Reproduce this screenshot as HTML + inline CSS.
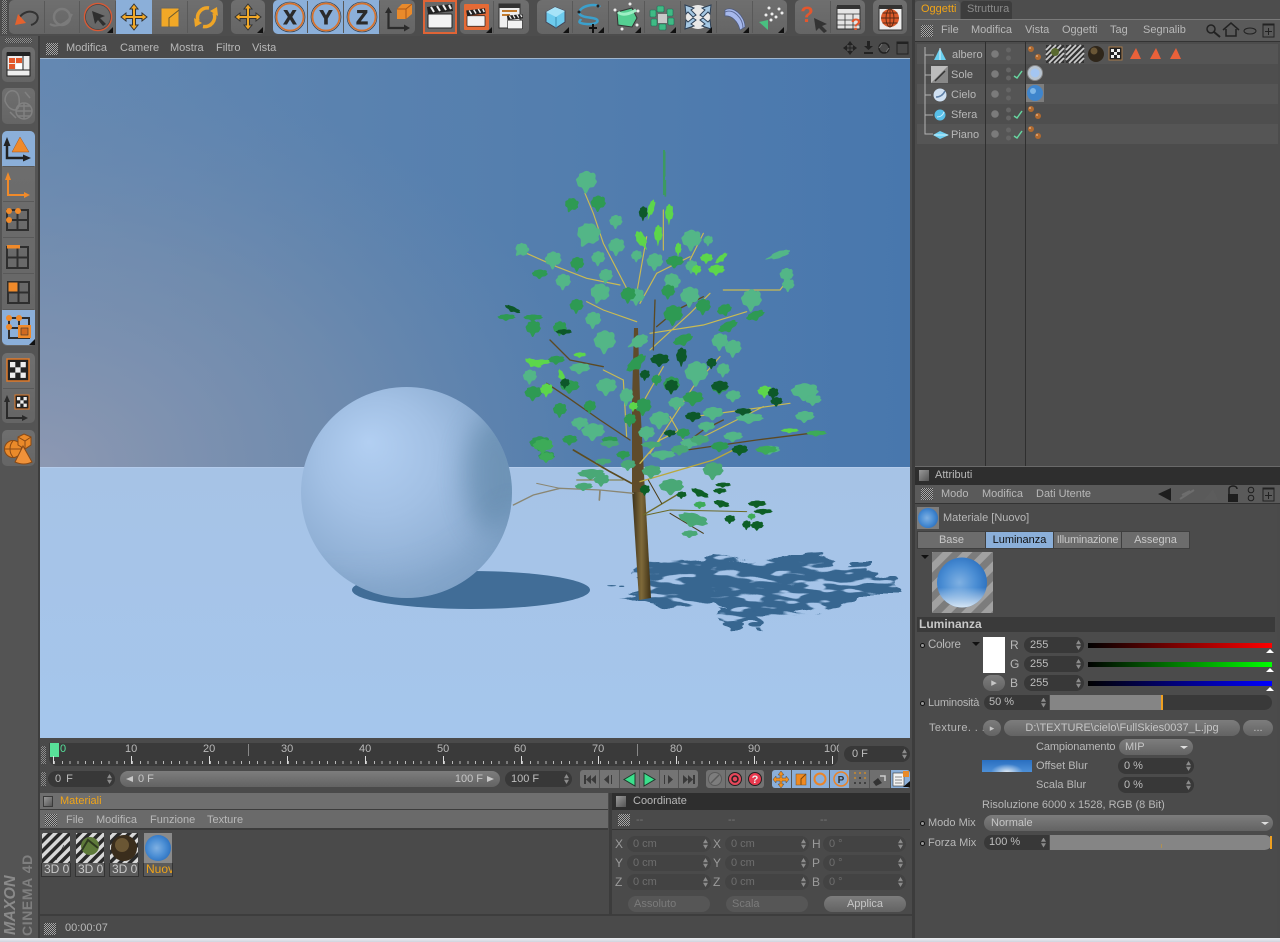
<!DOCTYPE html>
<html><head><meta charset="utf-8"><title>Cinema 4D</title>
<style>
html,body{margin:0;padding:0;background:#4a4a4a}
#p{position:relative;width:1280px;height:942px;overflow:hidden;background:#4a4a4a;font-family:"Liberation Sans",sans-serif;font-size:11px;color:#b8b8b8}
#p div{position:absolute;box-sizing:border-box}
.t{position:absolute;white-space:nowrap;line-height:13px}
.g{width:12px;height:12px;background:repeating-conic-gradient(#a8a8a8 0 25%,#3e3e3e 0 50%) 0 0/2px 2px}
.b{background:linear-gradient(#6f6f6f,#656565);border-radius:5px}
.u{background:#8bafd9}
.f{background:#383838;border-radius:8px;color:#bdbdbd;line-height:16px;padding-left:6px;white-space:nowrap}
.f::after{content:"";position:absolute;right:3px;top:50%;margin-top:-5px;width:5px;height:10px;background:#8c8c8c;clip-path:polygon(50% 0,100% 42%,0 42%,50% 0,50% 100%,0 58%,100% 58%,50% 100%)}
.d{color:#6e6e6e;background:#434343}
.p{background:linear-gradient(#7d7d7d,#636363);border-radius:8px;color:#c6c6c6;text-align:center;line-height:16px;white-space:nowrap;overflow:hidden}
.c{text-align:center;line-height:16px;background:#6c6c6c;color:#c8c8c8;border:1px solid #3f3f3f}
.o{width:5px;height:5px;border:1px solid #111;border-radius:50%;background:#999}
</style></head><body><div id="p">

<!-- left column -->
<div style="left:0;top:0;width:38px;height:938px;background:#545454"></div>
<div style="left:38px;top:36px;width:2px;height:902px;background:#3d3d3d"></div>
<div style="left:0;top:0;width:1280px;height:36px;background:#4d4d4d"></div>
<div style="left:2px;top:0;width:5px;height:34px;background:repeating-conic-gradient(#8d8d8d 0 25%,#444 0 50%) 0 0/2px 2px"></div>
<div style="left:5px;top:38px;width:27px;height:5px;background:repeating-conic-gradient(#8d8d8d 0 25%,#444 0 50%) 0 0/2px 2px"></div>

<!-- top toolbar -->
<div class="b" style="left:9px;top:0;width:214px;height:34px"></div>
<div class="u" style="left:116px;top:0;width:36px;height:34px"></div>
<div class="b" style="left:231px;top:0;width:34px;height:34px"></div>
<div class="b" style="left:273px;top:0;width:142px;height:34px"></div>
<div class="u" style="left:273px;top:0;width:106px;height:34px;border-radius:5px 0 0 5px"></div>
<div style="left:423px;top:0;width:34px;height:34px;background:#686868;border:2px solid #df6436"></div>
<div class="b" style="left:460px;top:0;width:69px;height:34px"></div>
<div class="b" style="left:537px;top:0;width:250px;height:34px"></div>
<div class="b" style="left:795px;top:0;width:70px;height:34px"></div>
<div class="b" style="left:873px;top:0;width:34px;height:34px"></div>

<!-- left toolbar -->
<div class="b" style="left:2px;top:47px;width:33px;height:35px"></div>
<div class="b" style="left:2px;top:88px;width:33px;height:36px"></div>
<div class="b" style="left:2px;top:131px;width:33px;height:215px"></div>
<div class="u" style="left:2px;top:131px;width:33px;height:35px;border-radius:5px 5px 0 0"></div>
<div class="u" style="left:2px;top:310px;width:33px;height:35px;border-radius:0 0 5px 5px"></div>
<div class="b" style="left:2px;top:353px;width:33px;height:70px"></div>
<div class="b" style="left:2px;top:430px;width:33px;height:36px"></div>
<div class="t" style="left:-20px;top:897px;transform:rotate(-90deg);font-weight:bold;font-style:italic;font-size:16px;line-height:14px;width:62px;color:#8a8a8a">MAXON</div>
<div class="t" style="left:-13px;top:889px;transform:rotate(-90deg);font-weight:bold;font-size:14px;line-height:14px;width:80px;color:#7f7f7f;letter-spacing:.6px">CINEMA 4D</div>

<!-- viewport menu -->
<div class="g" style="left:46px;top:43px"></div>
<span class="t" style="left:66px;top:42px">Modifica</span><span class="t" style="left:120px;top:42px">Camere</span><span class="t" style="left:170px;top:42px">Mostra</span><span class="t" style="left:216px;top:42px">Filtro</span><span class="t" style="left:252px;top:42px">Vista</span>

<!-- viewport scene & icons -->
<svg style="position:absolute;left:0;top:0;z-index:3" width="1280" height="942" viewBox="0 0 1280 942" xmlns="http://www.w3.org/2000/svg">
<defs>
<linearGradient id="sk" x1="0" y1="0" x2="1" y2="0"><stop offset="0" stop-color="#6488b2"/><stop offset=".35" stop-color="#5a82af"/><stop offset="1" stop-color="#4877ad"/></linearGradient>
<radialGradient id="sl" cx="0" cy="1" r="1"><stop offset="0" stop-color="#8f99b2" stop-opacity=".95"/><stop offset=".55" stop-color="#7e91ad" stop-opacity=".55"/><stop offset="1" stop-color="#6f8aad" stop-opacity="0"/></radialGradient>
<linearGradient id="fl" x1="0" y1="0" x2="0" y2="1"><stop offset="0" stop-color="#a6c3e6"/><stop offset="1" stop-color="#a5c6ec"/></linearGradient>
<radialGradient id="sp" cx=".42" cy=".42" r=".62" fx=".32" fy=".26"><stop offset="0" stop-color="#b2cff2"/><stop offset=".45" stop-color="#a2c0e4"/><stop offset=".8" stop-color="#90b0d5"/><stop offset="1" stop-color="#7da0c5"/></radialGradient>
<linearGradient id="tr" x1="0" y1="0" x2="1" y2="0"><stop offset="0" stop-color="#3a2f18"/><stop offset=".5" stop-color="#7f6a3a"/><stop offset="1" stop-color="#3d3015"/></linearGradient>
<filter id="bl" x="-50%" y="-50%" width="200%" height="200%"><feGaussianBlur stdDeviation="13"/></filter>
<filter id="sb"><feGaussianBlur stdDeviation=".3"/></filter>
<filter id="mot" x="-5%" y="-10%" width="110%" height="120%" color-interpolation-filters="sRGB">
<feTurbulence type="fractalNoise" baseFrequency=".035 .15" numOctaves="2" seed="7" result="n"/>
<feDisplacementMap in="SourceGraphic" in2="n" scale="16" xChannelSelector="R" yChannelSelector="G" result="d"/>
<feColorMatrix in="n" type="matrix" values="0 0 0 0 0 0 0 0 0 0 0 0 0 0 0 -14 0 0 0 8.800" result="m"/>
<feComposite in="d" in2="m" operator="in"/>
</filter>
<clipPath id="sc"><circle cx="406.500" cy="492.500" r="105.500"/></clipPath>
<clipPath id="vc"><rect x="40" y="58" width="870" height="680"/></clipPath>
<path id="l" d="M0-10C3-10 3-7 5-8S9-7 8-4 11-1 9 1 8 5 5 5 2 6 0 10-2 6-5 5-8 5-9 1-11-1-8-4-9-7-5-8-3-10 0-10Z"/>
<g id="mv"><path d="M0-13 4-8H1.500V-1.500H8V-4L13 0 8 4V1.500H1.500V8H4L0 13-4 8H-1.500V1.500H-8V4L-13 0-8-4V-1.500H-1.500V-8H-4Z" fill="#f1a827" stroke="#333" stroke-width="1"/></g>
<g id="cl"><rect x="-12" y="-3" width="24" height="14" rx="1" fill="#f2f2f2" stroke="#222"/><path d="M-13-10 12-13 13-6-12-3Z" fill="#222"/><path d="M-9-10-6-5M-3-11 0-6M3-12 6-7M9-12 11-8" stroke="#eee" stroke-width="2"/></g>
<path id="tg" d="M6 0V6H0Z" fill="#111"/>
<g id="ball"><circle cx="0" cy="0" r="3" fill="#b06a30"/><circle cx="-1" cy="-1" r="1" fill="#e0a878"/></g>
</defs>
<g clip-path="url(#vc)">
<rect x="40" y="58" width="870" height="410" fill="url(#sk)"/>
<rect x="40" y="58" width="560" height="410" fill="url(#sl)"/>
<rect x="40" y="467" width="870" height="271" fill="url(#fl)"/>
<rect x="40" y="467" width="870" height="1" fill="#b3cbeb"/>
<ellipse cx="471" cy="590" rx="119" ry="19" fill="#416d97"/>
<circle cx="406.500" cy="492.500" r="105.500" fill="url(#sp)"/>
<g clip-path="url(#sc)"><ellipse cx="495" cy="475" rx="30" ry="60" fill="#5f86a8" opacity=".65" filter="url(#bl)"/><path d="M320 575C400 590 470 560 515 500V610H320Z" fill="#82a4c9" opacity=".45" filter="url(#bl)"/></g>

<!-- tree shadow -->
<g filter="url(#mot)" fill="#376690">
<g transform="translate(500 430) scale(.33333)">
<path d="M440 400 600 388 640 375 760 395 860 382 960 372 1010 402 1110 402 1100 430 1180 442 1200 495 1110 495 1050 515 970 540 880 550 780 560 700 548 640 515 590 530 480 530 410 518 360 500 450 470 395 428Z"/>
<path d="M650 530 760 550 790 595 740 580 700 605 660 570Z"/>
</g>
</g>
<g transform="translate(500 430) scale(.33333)" fill="#376690"><ellipse cx="335" cy="467" rx="14" ry="2"/><ellipse cx="365" cy="469" rx="8" ry="2"/><ellipse cx="700" cy="582" rx="32" ry="9"/><ellipse cx="765" cy="583" rx="20" ry="7"/></g>

<g filter="url(#sb)">
<!-- trunk -->
<path d="M632 490 639 600 651 598 645 490Z" fill="url(#tr)"/>
<path d="M632 400 632 492 645 492 640 400 638 328 634 328Z" fill="#5f4b2b"/>
<!-- branches upper -->
<g transform="translate(490 150) scale(.33333)" fill="none" stroke-linecap="round">
<g stroke="#c9bb52" stroke-width="3.500"><path d="M410 415 340 280 310 190 285 130M390 405 290 385 200 350 110 310M440 515 340 480 290 455M480 550 640 525 770 485M480 600 600 490 660 430M440 430 470 260M520 300V180M600 330 640 250M700 420 870 420 900 380M460 755 520 650M480 910 610 710 690 620M410 860 400 690 340 660M560 900 820 770M250 900 340 955M610 800 760 780 900 760M450 460 500 370 600 320M540 800 580 870"/></g>
<g stroke="#5b4a22" stroke-width="4"><path d="M420 870 330 810 230 740 170 700M495 450 490 600M500 530 560 480 640 440M560 900 640 840 700 810M180 570 240 630 340 650M590 900 800 870 1000 845"/></g>
</g>
<!-- branches lower -->
<g transform="translate(500 430) scale(.33333)" fill="none" stroke-linecap="round">
<path d="M400 190 300 180 180 175 100 195 40 225" stroke="#8a8672" stroke-width="4"/><path d="M110 160 180 175" stroke="#8a8672" stroke-width="3"/><path d="M300 182 298 210" stroke="#8a8672" stroke-width="5"/>
<path d="M395 160 330 125 220 60" stroke="#5a4b23" stroke-width="5"/><path d="M420 155 640 90 700 60" stroke="#b9a83e" stroke-width="4"/><path d="M430 255 530 195" stroke="#6d6a2a" stroke-width="4"/><path d="M440 255 510 240 740 245" stroke="#6b6a28" stroke-width="3"/><path d="M510 250 610 310" stroke="#4a3b18" stroke-width="3"/><path d="M445 150 485 220" stroke="#4a3b18" stroke-width="3"/><path d="M420 100 480 30 540 0" stroke="#c9bb52" stroke-width="4"/><path d="M230 150H370" stroke="#7d7530" stroke-width="3"/>
</g>
<path d="M664 150V195" stroke="#3b9a62" stroke-width="2"/>
<!-- leaves upper -->
<g transform="translate(490 150) scale(.33333)">
<g fill="#52b687" stroke="#52b687" stroke-width="1.500"><use href="#l" transform="translate(290 95) scale(3)"/><use href="#l" transform="translate(378 215) scale(1.900)"/><use href="#l" transform="translate(295 255) rotate(25) scale(3.400)"/><use href="#l" transform="translate(95 300) rotate(40) scale(2)"/><use href="#l" transform="translate(190 330) scale(2.400)"/><use href="#l" transform="translate(325 325) scale(2)"/><use href="#l" transform="translate(348 378) scale(2)"/><use href="#l" transform="translate(220 395) scale(2.200)"/><use href="#l" transform="translate(330 430) rotate(15) scale(2.800)"/><use href="#l" transform="translate(380 290) scale(2.400)"/><use href="#l" transform="translate(440 318) scale(1.600)"/><use href="#l" transform="translate(310 510) scale(2.300)"/><use href="#l" transform="translate(605 270) scale(2.900)"/><use href="#l" transform="translate(655 272) scale(1.400)"/><use href="#l" transform="translate(495 335) scale(2.400)"/><use href="#l" transform="translate(605 350) scale(1.800)"/><use href="#l" transform="translate(545 395) rotate(40) scale(2.400)"/><use href="#l" transform="translate(600 440) scale(2.800)"/><use href="#l" transform="translate(785 450) scale(3)"/><use href="#l" transform="translate(690 575) scale(2.400)"/><use href="#l" transform="translate(730 595) scale(2.400)"/><use href="#l" transform="translate(865 315) rotate(70) scale(1,3.500)"/><use href="#l" transform="translate(890 375) scale(2)"/><use href="#l" transform="translate(895 405) scale(1.800)"/><use href="#l" transform="translate(345 575) scale(3.200)"/><use href="#l" transform="translate(445 575) rotate(60) scale(1.700,3)"/><use href="#l" transform="translate(620 670) scale(3.400)"/><use href="#l" transform="translate(700 660) scale(1.900)"/><use href="#l" transform="translate(730 738) scale(2.200,1.600)"/><use href="#l" transform="translate(945 725) scale(4,2.400)"/><use href="#l" transform="translate(970 750) scale(2.400,1.500)"/><use href="#l" transform="translate(945 800) scale(2.800,1.600)"/><use href="#l" transform="translate(780 805) scale(4,1.400)"/><use href="#l" transform="translate(670 790) scale(3,1.800)"/><use href="#l" transform="translate(350 710) scale(3,2.400)"/><use href="#l" transform="translate(270 655) scale(3,1.500)"/><use href="#l" transform="translate(120 680) scale(2)"/><use href="#l" transform="translate(270 820) scale(2.500,1.700)"/><use href="#l" transform="translate(310 845) scale(3.400,2.400)"/><use href="#l" transform="translate(510 810) scale(3,2.400)"/><use href="#l" transform="translate(600 880) scale(2.800,1.400)"/><use href="#l" transform="translate(840 900) scale(3,1.200)"/><use href="#l" transform="translate(650 830) scale(2.500,1.400)"/><use href="#l" transform="translate(520 915) scale(3.600,1.300)"/><use href="#l" transform="translate(440 440) scale(2.300)"/><use href="#l" transform="translate(470 850) scale(2.400,2)"/><use href="#l" transform="translate(560 760) scale(2.400,1.800)"/><use href="#l" transform="translate(410 740) scale(2,2.400)"/><use href="#l" transform="translate(730 860) scale(2.800,1.400)"/></g>
<g fill="#2f9a52" stroke="#2f9a52" stroke-width="1.500"><use href="#l" transform="translate(325 160) scale(2.200)"/><use href="#l" transform="translate(245 165) rotate(20) scale(2)"/><use href="#l" transform="translate(262 342) scale(2)"/><use href="#l" transform="translate(150 372) scale(2.300,1.300)"/><use href="#l" transform="translate(260 468) scale(2)"/><use href="#l" transform="translate(704 480) rotate(-20) scale(2.200,1.600)"/><use href="#l" transform="translate(797 497) rotate(-20) scale(2.800,1.300)"/><use href="#l" transform="translate(715 530) rotate(-25) scale(3,1.400)"/><use href="#l" transform="translate(640 470) scale(2.200)"/><use href="#l" transform="translate(555 335) scale(2.600,1.700)"/><use href="#l" transform="translate(415 435) scale(2.200)"/><use href="#l" transform="translate(535 425) scale(2)"/><use href="#l" transform="translate(550 495) scale(2.800)"/><use href="#l" transform="translate(580 570) rotate(-20) scale(3,1.500)"/><use href="#l" transform="translate(130 535) scale(2.200)"/><use href="#l" transform="translate(210 535) scale(2)"/><use href="#l" transform="translate(50 502) scale(2.600,.9)"/><use href="#l" transform="translate(130 503) scale(2.800,.9)"/><use href="#l" transform="translate(440 640) rotate(-40) scale(3.500,1.600)"/><use href="#l" transform="translate(240 710) scale(2.800,1.800)"/><use href="#l" transform="translate(130 730) scale(2.500,2)"/><use href="#l" transform="translate(210 780) scale(2)"/><use href="#l" transform="translate(300 770) scale(1.800)"/><use href="#l" transform="translate(360 870) scale(2.400,1)"/><use href="#l" transform="translate(150 880) scale(3,2)"/><use href="#l" transform="translate(170 920) scale(2.400,1.500)"/><use href="#l" transform="translate(610 745) scale(3,2)"/><use href="#l" transform="translate(545 705) scale(2.400)"/><use href="#l" transform="translate(500 690) scale(1.500)"/><use href="#l" transform="translate(460 770) scale(2.400)"/><use href="#l" transform="translate(400 915) scale(2,1.200)"/><use href="#l" transform="translate(690 715) scale(2.400,1.600)"/><use href="#l" transform="translate(200 630) scale(2.400,1.200)"/><use href="#l" transform="translate(420 810) scale(1.800)"/><use href="#l" transform="translate(690 890) scale(2.600,1.400)"/><use href="#l" transform="translate(580 850) scale(2,1.400)"/><use href="#l" transform="translate(240 870) scale(2.200,1.400)"/></g>
<g fill="#5cd64c"><use href="#l" transform="translate(483 178) rotate(15) scale(1,3)"/><use href="#l" transform="translate(538 192) scale(1.300,3)"/><use href="#l" transform="translate(455 270) rotate(-30) scale(1.500,3)"/><use href="#l" transform="translate(505 255) scale(1.300,3)"/><use href="#l" transform="translate(565 298) scale(1,2)"/><use href="#l" transform="translate(650 325) scale(2,1.500)"/><use href="#l" transform="translate(680 360) scale(2.600,1.600)"/><use href="#l" transform="translate(695 325) rotate(-40) scale(2.400,.9)"/><use href="#l" transform="translate(130 640) rotate(25) scale(2.800,1.200)"/><use href="#l" transform="translate(155 637) scale(2.800,.9)"/><use href="#l" transform="translate(215 680) rotate(70) scale(2.400,.9)"/><use href="#l" transform="translate(170 720) scale(2)"/><use href="#l" transform="translate(825 725) scale(2.300,1.800)"/><use href="#l" transform="translate(900 842) scale(2.800,.7)"/><use href="#l" transform="translate(270 615) scale(2,.8)"/><use href="#l" transform="translate(430 770) scale(1.400)"/><use href="#l" transform="translate(620 360) scale(1.500)"/></g>
<g fill="#11592a" stroke="#11592a" stroke-width="1.200"><use href="#l" transform="translate(460 190) scale(1.300,2)"/><use href="#l" transform="translate(68 478) rotate(25) scale(2.500,.8)"/><use href="#l" transform="translate(575 620) scale(1.600,2.600)"/><use href="#l" transform="translate(510 630) scale(2.800,1.800)"/><use href="#l" transform="translate(465 675) scale(1.500)"/><use href="#l" transform="translate(690 710) scale(2.600,1.700)"/><use href="#l" transform="translate(545 710) scale(2)"/><use href="#l" transform="translate(665 640) scale(1.500)"/><use href="#l" transform="translate(860 755) scale(1.800,1.300)"/><use href="#l" transform="translate(610 800) scale(2.400,1.400)"/><use href="#l" transform="translate(750 900) scale(2.400,1.400)"/><use href="#l" transform="translate(225 700) scale(1.400)"/><use href="#l" transform="translate(222 546) scale(2.400,.8)"/><use href="#l" transform="translate(850 730) scale(1.600)"/><use href="#l" transform="translate(540 850) scale(1.800,1)"/><use href="#l" transform="translate(760 785) scale(2.500,1)"/></g>
<path d="M524 5V80M526 90V140" stroke="#3d9960" stroke-width="5" fill="none"/>
</g>
<!-- leaves lower -->
<g transform="translate(500 430) scale(.33333)">
<g fill="#4aa876" stroke="#4aa876" stroke-width="1.500"><use href="#l" transform="translate(275 132) scale(4,1.400)"/><use href="#l" transform="translate(305 150) scale(2.300,1.700)"/><use href="#l" transform="translate(252 170) scale(2.600,1.100)"/><use href="#l" transform="translate(455 125) scale(2.800,1.800)"/><use href="#l" transform="translate(515 170) scale(3.600,2.200)"/><use href="#l" transform="translate(640 122) scale(3,2.400)"/><use href="#l" transform="translate(580 270) rotate(15) scale(4.400,1.900)"/><use href="#l" transform="translate(570 312) scale(2.400,1)"/><use href="#l" transform="translate(330 42) scale(2.800,1)"/><use href="#l" transform="translate(310 95) scale(2.400,.9)"/><use href="#l" transform="translate(385 105) scale(2.200,1.500)"/><use href="#l" transform="translate(455 45) scale(3,1)"/><use href="#l" transform="translate(540 60) scale(2.600,1.400)"/><use href="#l" transform="translate(600 30) scale(2.800,1.400)"/></g>
<g fill="#0f5f26" stroke="#0f5f26" stroke-width="1.200"><use href="#l" transform="translate(600 190) rotate(25) scale(2.800,1)"/><use href="#l" transform="translate(670 165) scale(2.300,.7)"/><use href="#l" transform="translate(660 183) scale(2,.8)"/><use href="#l" transform="translate(665 222) rotate(15) scale(2.400,1)"/><use href="#l" transform="translate(772 222) scale(2.700,1)"/><use href="#l" transform="translate(790 245) scale(2.800,.8)"/><use href="#l" transform="translate(690 268) scale(1.600,1.200)"/><use href="#l" transform="translate(740 285) scale(1.300)"/><use href="#l" transform="translate(772 287) scale(1.900,1.300)"/><use href="#l" transform="translate(720 60) scale(2.200,1.500)"/><use href="#l" transform="translate(435 180) scale(1.500)"/><use href="#l" transform="translate(545 195) scale(1.500,1)"/></g>
<g fill="#3dab58" stroke="#3dab58" stroke-width="1.200"><use href="#l" transform="translate(130 48) scale(3,2)"/><use href="#l" transform="translate(140 82) scale(2.200,1.400)"/><use href="#l" transform="translate(600 225) scale(1.800,1)"/><use href="#l" transform="translate(800 60) scale(3.200,1.200)"/><use href="#l" transform="translate(755 260) scale(1.200,.9)"/><use href="#l" transform="translate(950 10) scale(3,.8)"/></g>
</g>
</g>
</g>
<rect x="40" y="58" width="870" height="1" fill="#9fb6cf"/>

<!-- toolbar separators -->
<path d="M44.500 1V33M79.500 1V33M115.500 1V33M187.500 1V33M307.500 1V33M343.500 1V33M379.500 1V33M493.500 1V33M572.500 1V33M608.500 1V33M644.500 1V33M680.500 1V33M716.500 1V33M752.500 1V33M830.500 1V33" stroke="#595959"/>
<path d="M3 166.500H34M3 201.500H34M3 237.500H34M3 273.500H34M3 309.500H34M3 388.500H34" stroke="#595959"/>

<!-- TOOLBAR ICONS -->
<path d="M19 18C23 12 30 10 35 13S38 23 31 25" fill="none" stroke="#333" stroke-width="2"/><path d="M15 25 18 14 26 23Z" fill="#e4622e"/>
<circle cx="62" cy="17" r="8" fill="none" stroke="#7b7b7b" stroke-width="2.500"/><path d="M50 24C56 28 68 24 72 14" fill="none" stroke="#7b7b7b" stroke-width="2"/>
<circle cx="98" cy="17" r="13.500" fill="none" stroke="#d95a35" stroke-width="1.500"/><circle cx="98" cy="17" r="12.500" fill="none" stroke="#444" stroke-width=".7"/><path d="M92 11 105 16 100 18 106 24 103 26 98 20 95 24Z" fill="#2f2f2f"/><use href="#tg" x="107" y="27"/>
<use href="#mv" x="134" y="17"/><path d="M161 8H179V27H161Z" fill="#f1a827" stroke="#666"/><path d="M169 27V18L179 10" fill="none" stroke="#6a5a30" stroke-width="1"/>
<path d="M209 8A10 10 0 0 0 198 21M203 26.500A10 10 0 0 0 214 13" fill="none" stroke="#efa526" stroke-width="3.500"/><path d="M194 18 202 23 195 27ZM218 16 210 11 217 7Z" fill="#efa526"/>
<use href="#mv" x="248" y="17"/><use href="#tg" x="257" y="27"/>
<g fill="none"><circle cx="290" cy="17" r="13.500" stroke="#d9722a" stroke-width="1.700"/><circle cx="326" cy="17" r="13.500" stroke="#d9722a" stroke-width="1.700"/><circle cx="362" cy="17" r="13.500" stroke="#d9722a" stroke-width="1.700"/><circle cx="290" cy="17" r="15" stroke="#333" stroke-width=".6"/><circle cx="326" cy="17" r="15" stroke="#333" stroke-width=".6"/><circle cx="362" cy="17" r="15" stroke="#333" stroke-width=".6"/></g>
<g font-family="Liberation Sans,sans-serif" font-weight="bold" font-size="19" fill="#2b2b2b" stroke="#2b2b2b" stroke-width=".9" text-anchor="middle"><text x="290" y="24">X</text><text x="326" y="24">Y</text><text x="362" y="24">Z</text></g>
<path d="M388.500 11V28H405" fill="none" stroke="#2b2b2b" stroke-width="2.200"/><path d="M385 13 388.500 7 392 13ZM404 24.500 410 28 404 31.500Z" fill="#2b2b2b"/><path d="M397 9 402 4H412V14L406 19H397Z" fill="#e98a2b"/><path d="M397 9H406V19M406 9 412 4" stroke="#a9571a" fill="none"/>
<use href="#cl" x="440" y="17"/>
<rect x="464" y="4" width="25" height="26" fill="#e56a35" rx="1"/><use href="#cl" transform="translate(476 18) scale(.75)"/><use href="#tg" x="486" y="27"/>
<rect x="499" y="4" width="21" height="24" fill="#eee" stroke="#333"/><rect x="499" y="4" width="21" height="4" fill="#333"/><path d="M502 11H517M502 15H510" stroke="#c17a2c" stroke-width="2"/><use href="#cl" transform="translate(515 22) scale(.62)"/>
<path d="M546 12 555 7 565 11V22L556 28 546 22Z" fill="#6dcbee" stroke="#445"/><path d="M546 12 556 17 565 11 555 7Z" fill="#a6e3f8"/><path d="M556 17V28" stroke="#3c8fb4"/><use href="#tg" x="563" y="27"/>
<path d="M579 13C580 5 597 3 600 7M579 13C581 18 592 17 596 19S596 25 586 24 580 21 581 19" fill="none" stroke="#3ba0cc" stroke-width="2.500"/><circle cx="579" cy="12" r="1.500" fill="#222"/><circle cx="598" cy="6" r="1.500" fill="#222"/><path d="M593 24V33M589 28H597" stroke="#111" stroke-width="2"/><use href="#tg" x="598" y="27"/>
<path d="M617 12 632 8 637 18 632 27 618 25Z" fill="#55cf92" stroke="#333"/><path d="M618 12C622 16 630 14 636 10" fill="none" stroke="#9eefc5" stroke-width="3"/><g fill="#eee"><circle cx="615" cy="10" r="1.500"/><circle cx="630" cy="4" r="1.500"/><circle cx="638" cy="11" r="1.500"/><circle cx="637" cy="25" r="1.500"/><circle cx="622" cy="29" r="1.500"/></g><use href="#tg" x="635" y="27"/>
<g fill="#3fbb85" stroke="#1f6a55" stroke-width=".6"><rect x="657" y="6" width="7" height="6" rx="1"/><rect x="667" y="9" width="6" height="7" rx="1"/><rect x="668" y="18" width="6" height="7" rx="1"/><rect x="659" y="24" width="7" height="6" rx="1"/><rect x="651" y="19" width="6" height="7" rx="1"/><rect x="650" y="10" width="6" height="7" rx="1"/></g><rect x="658" y="14" width="9" height="9" fill="#c8c8c8"/><use href="#tg" x="670" y="27"/>
<ellipse cx="698" cy="17" rx="12" ry="12" fill="#fff" opacity=".85"/><g fill="#a5c8e4" stroke="#2c3f55"><path d="M685 5 694 8 691 10 696 15 693 17 688 12 686 14Z"/><path d="M711 5 702 8 705 10 700 15 703 17 708 12 710 14Z"/><path d="M685 29 694 26 691 24 696 20 693 18 688 22 686 20Z"/><path d="M711 29 702 26 705 24 700 20 703 18 708 22 710 20Z"/></g><use href="#tg" x="706" y="27"/>
<path d="M725 10C733 5 745 16 745 27L740 30C738 21 731 15 725 16Z" fill="#a7b9ec" stroke="#4c5a80" stroke-width=".7"/><path d="M725 12C733 8 743 18 743 28" fill="none" stroke="#5d6c9a"/><use href="#tg" x="743" y="27"/>
<g fill="#eee"><circle cx="769" cy="8" r="1.500"/><circle cx="779" cy="9" r="1.500"/><circle cx="772" cy="14" r="1.500"/><circle cx="782" cy="13" r="1.500"/><circle cx="766" cy="15" r="1.500"/><circle cx="776" cy="17" r="1.500"/><circle cx="771" cy="20" r="1.500"/></g><path d="M759 22 768 20 768 30Z" fill="#49c080"/><use href="#tg" x="778" y="27"/>
<text x="807" y="22" font-family="Liberation Sans,sans-serif" font-size="22" font-weight="bold" fill="#e4562d" text-anchor="middle">?</text><path d="M814 18 827 24 822 26 827 31 824 33 819 28 816 31Z" fill="#333"/>
<rect x="837" y="7" width="23" height="22" fill="#e4e4e4" stroke="#333"/><rect x="837" y="5" width="23" height="4" fill="#333"/><path d="M837 14H860M837 20H860M837 25H860M845 14V29M853 14V29" stroke="#333" stroke-width=".8"/><text x="856" y="30" font-family="Liberation Sans,sans-serif" font-size="17" font-weight="bold" fill="#e4562d" text-anchor="middle">?</text>
<rect x="879" y="7" width="23" height="23" fill="#eee" stroke="#333"/><rect x="879" y="5" width="23" height="4" fill="#333"/><circle cx="890" cy="18" r="9" fill="#dc5a2a"/><g fill="none" stroke="#5a2a15" stroke-width=".9"><ellipse cx="890" cy="18" rx="4" ry="9"/><path d="M881 18H899M882.500 13H897.500M882.500 23H897.500M890 9V27"/></g>

<!-- LEFT ICONS -->
<rect x="7" y="53" width="23" height="23" fill="#eee" stroke="#222"/><rect x="7" y="52" width="23" height="4" fill="#222"/><rect x="9" y="58" width="6" height="5" fill="#e2572a"/><rect x="16" y="58" width="6" height="5" fill="#e2572a"/><rect x="9" y="64" width="6" height="5" fill="#e2572a"/><rect x="16" y="64" width="6" height="5" fill="#fff"/><path d="M7 70H30M23 56V70" stroke="#222"/>
<g fill="none" stroke="#818181" stroke-width="1.500"><path d="M5 101C5 93 10 90 14 91S20 97 19 105 9 111 5 101Z"/><circle cx="24" cy="111" r="8"/><path d="M16 111H32M24 103V119M18 106H30M18 116H30"/><path d="M25 92 30 98M10 112 16 118"/></g>
<path d="M7 141V158H24" fill="none" stroke="#222" stroke-width="2.500"/><path d="M3.500 146 7 137 10.500 146ZM23 154.500 31 158 23 161.500Z" fill="#222"/><path d="M12 152 20 137 29 152Z" fill="#f08a2a" stroke="#a5541a" stroke-width=".5"/>
<path d="M8 180V195H25" fill="none" stroke="#f08a2a" stroke-width="2"/><path d="M5 180 8 172 11 180ZM24 192 30 195 24 198Z" fill="#f08a2a"/>
<path d="M7 210H28V230H7ZM17.500 210V230M7 220H28" fill="none" stroke="#2e2e2e" stroke-width="2"/><g fill="#f08a2a"><circle cx="9" cy="211" r="3"/><circle cx="18" cy="211" r="3"/><circle cx="9" cy="220" r="3"/></g>
<rect x="7" y="247" width="21" height="21" fill="none" stroke="#2e2e2e" stroke-width="2"/><path d="M17.500 247V268M7 257.500H28" stroke="#2e2e2e" stroke-width="2"/><rect x="7" y="245" width="13" height="3.500" fill="#f08a2a"/>
<rect x="8" y="282" width="21" height="21" fill="none" stroke="#2e2e2e" stroke-width="2"/><path d="M18.500 282V303M8 292.500H29" stroke="#2e2e2e" stroke-width="2"/><rect x="8" y="282" width="10" height="10" fill="#f08a2a" stroke="#2e2e2e"/>
<path d="M9 318H29V338H9ZM19 318V338M9 328H29" fill="none" stroke="#2e2e2e" stroke-width="2"/><g fill="#f08a2a"><circle cx="9" cy="318" r="3"/><circle cx="19" cy="318" r="3"/><circle cx="9" cy="327" r="3"/></g><rect x="18" y="325" width="13" height="13" fill="#f08a2a"/><rect x="21" y="328" width="7" height="7" fill="#d06a20" stroke="#333" stroke-width=".6"/><use href="#tg" x="29" y="339"/>
<rect x="7" y="359" width="22" height="22" fill="#222" stroke="#e07a2a" stroke-width="1.500"/><g fill="#eee"><rect x="10" y="362" width="5.300" height="5.300"/><rect x="20.500" y="362" width="5.300" height="5.300"/><rect x="15.300" y="367.300" width="5.300" height="5.300"/><rect x="10" y="372.600" width="5.300" height="5.300"/><rect x="20.500" y="372.600" width="5.300" height="5.300"/></g>
<path d="M7 402V418H24" fill="none" stroke="#2a2a2a" stroke-width="2"/><path d="M4 402 7 395 10 402ZM22 415 28 418 22 421Z" fill="#2a2a2a"/><rect x="15" y="395" width="14" height="14" fill="#222" stroke="#e07a2a"/><g fill="#eee"><rect x="17" y="397" width="3.300" height="3.300"/><rect x="23.500" y="397" width="3.300" height="3.300"/><rect x="20.300" y="400.300" width="3.300" height="3.300"/><rect x="17" y="403.600" width="3.300" height="3.300"/><rect x="23.500" y="403.600" width="3.300" height="3.300"/></g>
<circle cx="13" cy="449" r="8.500" fill="#ea8a2a" stroke="#8a4a15"/><path d="M5 449H21M13 441C9 445 9 453 13 457" stroke="#8a4a15" fill="none"/><path d="M18 437 24 434 31 437V445L25 449 18 445Z" fill="#ea8a2a" stroke="#8a4a15"/><path d="M18 437 25 441 31 437M25 441V449" fill="none" stroke="#8a4a15"/><path d="M23 446 32 462Q24 466 15 462Z" fill="#f0923a" stroke="#8a4a15"/>

<!-- VIEWPORT HEADER ICONS -->
<g fill="#222"><path d="M850 41 853 45H847ZM850 55 853 51H847ZM843 48 847 45V51ZM857 48 853 45V51Z"/><path d="M850 45V51M847 48H853" stroke="#222"/><path d="M867 41H870V46H873L868.500 50 864 46H867ZM864 52H873V54H864Z"/></g><circle cx="884" cy="48" r="5" fill="none" stroke="#222" stroke-width="1.500"/><path d="M879 48 882 44M889 48 886 52" stroke="#777"/><rect x="897" y="42" width="11" height="12" fill="none" stroke="#222" stroke-width="1"/><rect x="897" y="42" width="11" height="2" fill="#222"/>

<!-- obj manager icons -->
<path d="M925 47V123M925 55H934M925 75H931M925 95H931M925 115H933M925 123V134H933" stroke="#b3b3b3" fill="none"/>
<path d="M940 48 946 60H934Z" fill="#6ad0f0"/><path d="M940 48 940 60" stroke="#d9f3fd"/>
<rect x="931" y="66" width="17" height="17" fill="#888"/><path d="M931 66H948L931 83Z" fill="#bcbcbc"/><path d="M935 81 945 71" stroke="#333" stroke-width="1.500"/>
<circle cx="940" cy="95" r="6.500" fill="#cfe0f2"/><path d="M936 97C940 97 943 95 945 91" fill="none" stroke="#5e7fa6" stroke-width="1.500"/>
<circle cx="940" cy="115" r="5.500" fill="#58bfe8"/><path d="M937 117C941 117 943 115 944 112" fill="none" stroke="#cdefff"/>
<path d="M933 135 940 131 949 135 940 139Z" fill="#6fd0f2"/><path d="M934 135H948" stroke="#cdf0fb"/>
<g fill="#7b7b7b"><circle cx="995" cy="54" r="3.800"/><circle cx="995" cy="74" r="3.800"/><circle cx="995" cy="94" r="3.800"/><circle cx="995" cy="114" r="3.800"/><circle cx="995" cy="134" r="3.800"/></g>
<g fill="#656565"><circle cx="1008.500" cy="50" r="2.500"/><circle cx="1008.500" cy="58" r="2.500"/><circle cx="1008.500" cy="70" r="2.500"/><circle cx="1008.500" cy="78" r="2.500"/><circle cx="1008.500" cy="90" r="2.500"/><circle cx="1008.500" cy="98" r="2.500"/><circle cx="1008.500" cy="110" r="2.500"/><circle cx="1008.500" cy="118" r="2.500"/><circle cx="1008.500" cy="130" r="2.500"/><circle cx="1008.500" cy="138" r="2.500"/></g>
<path d="M1014 76 1017 78 1022 71M1014 116 1017 118 1022 111M1014 136 1017 138 1022 131" fill="none" stroke="#66d6a0" stroke-width="1.500"/>
<use href="#ball" x="1031" y="49"/><use href="#ball" x="1038" y="57"/><use href="#ball" x="1031" y="109"/><use href="#ball" x="1038" y="116"/><use href="#ball" x="1031" y="129"/><use href="#ball" x="1038" y="136"/>
<rect x="1046" y="45" width="18" height="18" fill="#333"/><path d="M1046 55 1056 45M1046 60 1061 45M1049 63 1064 48M1054 63 1064 53M1046 50 1051 45M1059 63 1064 58" stroke="#ccc" stroke-width="1.800"/>
<rect x="1066" y="45" width="18" height="18" fill="#333"/><path d="M1066 55 1076 45M1066 60 1081 45M1069 63 1084 48M1074 63 1084 53M1066 50 1071 45M1079 63 1084 58" stroke="#ccc" stroke-width="1.800"/>
<circle cx="1055" cy="52" r="4" fill="#5a6a30"/>
<rect x="1087" y="45" width="18" height="18" fill="#555"/><circle cx="1096" cy="54" r="8" fill="#2f261a"/><circle cx="1094" cy="51" r="3.500" fill="#6a5636"/>
<rect x="1109" y="47" width="13" height="13" fill="#222" stroke="#a87a4a"/><g fill="#eee"><rect x="1111" y="49" width="3" height="3"/><rect x="1117" y="49" width="3" height="3"/><rect x="1114" y="52" width="3" height="3"/><rect x="1111" y="55" width="3" height="3"/><rect x="1117" y="55" width="3" height="3"/></g>
<path d="M1136 48 1141 59H1130ZM1156 48 1161 59H1150ZM1176 48 1181 59H1170Z" fill="#e8613a"/>
<circle cx="1035" cy="73" r="7.500" fill="#b8c4d0" stroke="#888"/><circle cx="1035" cy="73" r="4.500" fill="#a4c6f2"/>
<rect x="1026" y="84" width="18" height="18" fill="#7d7d7d"/><circle cx="1035" cy="93" r="8" fill="#3f85cc"/><circle cx="1033" cy="91" r="3" fill="#8fc2ee" opacity=".8"/>

<!-- obj menu right icons -->
<circle cx="1211" cy="29" r="4" fill="none" stroke="#222" stroke-width="1.500"/><path d="M1214 32 1220 37" stroke="#222" stroke-width="2"/><path d="M1223 30 1231 23 1239 30M1226 29V36H1236V29" fill="none" stroke="#222" stroke-width="1.500"/><ellipse cx="1250" cy="31" rx="6" ry="3" fill="none" stroke="#222"/><rect x="1263" y="24" width="11" height="13" fill="none" stroke="#222"/><path d="M1268.500 28V35M1265 31.500H1272M1263 25H1274" stroke="#222"/>
<path d="M1158 494 1171 488V501Z" fill="#1e1e1e"/><path d="M1180 499 1194 490M1182 495 1190 491" stroke="#6d6d6d" stroke-width="2"/><path d="M1204 500H1218L1213 489Z" fill="#5c5c5c"/><path d="M1228 494H1238V502H1228Z" fill="#1e1e1e"/><path d="M1229 494V489C1229 485 1237 485 1237 489" fill="none" stroke="#1e1e1e" stroke-width="1.500"/><g fill="none" stroke="#1e1e1e"><circle cx="1251" cy="490" r="2.800"/><circle cx="1251" cy="498" r="2.800"/></g><rect x="1263" y="488" width="11" height="13" fill="none" stroke="#222"/><path d="M1268.500 492V499M1265 495.500H1272M1263 489H1274" stroke="#222"/>

<!-- material thumb + preview -->
<defs><pattern id="st" width="14" height="14" patternUnits="userSpaceOnUse" patternTransform="rotate(45)"><rect width="14" height="14" fill="#a1a1a1"/><rect width="7" height="14" fill="#7c7c7c"/></pattern>
<pattern id="bw" width="7" height="7" patternUnits="userSpaceOnUse" patternTransform="rotate(45)"><rect width="7" height="7" fill="#d8d8d8"/><rect width="3.500" height="7" fill="#2a2a2a"/></pattern>
<radialGradient id="bl2" cx=".45" cy=".5" r=".55"><stop offset="0" stop-color="#7fb0e2"/><stop offset=".6" stop-color="#4b8ed4"/><stop offset="1" stop-color="#2f74c2"/></radialGradient>
<linearGradient id="blG" x1="0" y1="0" x2="0" y2="1"><stop offset=".6" stop-color="#fff" stop-opacity="0"/><stop offset="1" stop-color="#e8f2fa" stop-opacity=".9"/></linearGradient></defs>
<rect x="917" y="507" width="22" height="22" fill="#7d7d7d"/><circle cx="928" cy="518" r="10" fill="url(#bl2)"/>
<rect x="932" y="552" width="61" height="61" fill="url(#st)"/><circle cx="962" cy="582.500" r="25" fill="url(#bl2)"/><circle cx="962" cy="582.500" r="25" fill="url(#blG)"/>
<!-- mat thumbs -->
<rect x="42" y="833" width="28" height="30" fill="url(#bw)"/><path d="M56 860 64 845" stroke="#222" stroke-width=".6"/>
<rect x="76" y="833" width="28" height="30" fill="url(#bw)"/><circle cx="90" cy="846" r="9" fill="#5e7a3a"/><path d="M82 850 88 840 98 848" fill="none" stroke="#2f3a20" stroke-width="2"/>
<rect x="110" y="833" width="28" height="30" fill="url(#bw)"/><circle cx="124" cy="848" r="13" fill="#3a2d1c"/><circle cx="122" cy="845" r="7" fill="#6a5634"/>
<rect x="144" y="833" width="28" height="30" fill="#8a8a8a"/><circle cx="158" cy="848" r="13" fill="url(#bl2)"/>
</svg>

<!-- timeline -->
<div style="left:41px;top:746px;width:5px;height:18px;background:repeating-conic-gradient(#8d8d8d 0 25%,#444 0 50%) 0 0/2px 2px"></div>
<div style="left:49px;top:743px;width:789px;height:23px;background:#3a3a3a;border-radius:0 0 8px 8px;z-index:0"></div>
<div style="left:54px;top:761px;width:778px;height:3px;background:repeating-linear-gradient(90deg,#b8b8b8 0 1px,transparent 1px 7.800px);z-index:1"></div>
<div style="left:50px;top:743px;width:9px;height:14px;background:#58e199;z-index:1"></div>
<svg style="position:absolute;left:0;top:0;z-index:1" width="1280" height="942"><path d="M53.500 756V764M131.500 756V764M209.500 756V764M287.500 756V764M365.500 756V764M443.500 756V764M521.500 756V764M598.500 756V764M676.500 756V764M754.500 756V764M832.500 756V764" stroke="#ddd"/><path d="M248.500 744V756M637.500 744V756" stroke="#888"/></svg>
<span class="t" style="left:60px;top:743px;color:#56e09a;z-index:2">0</span>
<span class="t" style="left:125px;top:743px;z-index:2">10</span><span class="t" style="left:203px;top:743px;z-index:2">20</span><span class="t" style="left:281px;top:743px;z-index:2">30</span><span class="t" style="left:359px;top:743px;z-index:2">40</span><span class="t" style="left:437px;top:743px;z-index:2">50</span><span class="t" style="left:514px;top:743px;z-index:2">60</span><span class="t" style="left:592px;top:743px;z-index:2">70</span><span class="t" style="left:670px;top:743px;z-index:2">80</span><span class="t" style="left:748px;top:743px;z-index:2">90</span><span class="t" style="left:824px;top:743px;z-index:2;width:15px;overflow:hidden">100</span>
<div class="f" style="left:844px;top:746px;width:66px;height:16px;padding-left:8px">0 F</div>

<!-- row 2 -->
<div style="left:41px;top:772px;width:5px;height:14px;background:repeating-conic-gradient(#8d8d8d 0 25%,#444 0 50%) 0 0/2px 2px"></div>
<div class="f" style="left:48px;top:771px;width:67px;height:16px;padding-left:7px;letter-spacing:1px">0 F</div>
<div class="p" style="left:120px;top:771px;width:380px;height:16px;text-align:left;padding-left:18px">0 F<span class="t" style="right:17px;top:2px">100 F</span></div>
<div style="left:126px;top:776px;width:7px;height:6px;background:#c8c8c8;clip-path:polygon(0 50%,100% 0,100% 100%)"></div>
<div style="left:487px;top:776px;width:7px;height:6px;background:#c8c8c8;clip-path:polygon(100% 50%,0 0,0 100%)"></div>
<div class="f" style="left:505px;top:771px;width:67px;height:16px;padding-left:6px">100 F</div>

<!-- transport -->
<div class="b" style="left:580px;top:770px;width:118px;height:18px;background:#747474;border-radius:3px"></div>
<div class="b" style="left:706px;top:770px;width:58px;height:18px;background:#727272;border-radius:3px"></div>
<div class="b" style="left:772px;top:770px;width:138px;height:18px;background:#6f6f6f;border-radius:3px"></div>
<div class="u" style="left:772px;top:770px;width:77px;height:18px;border-radius:3px 0 0 3px"></div>
<div class="u" style="left:890px;top:770px;width:20px;height:18px;border-radius:0 3px 3px 0"></div>
<svg style="position:absolute;left:0;top:0;z-index:1" width="1280" height="942">
<g stroke="#555"><path d="M599.500 770V788M619.500 770V788M639.500 770V788M659.500 770V788M678.500 770V788M725.500 770V788M745.500 770V788M791.500 770V788M810.500 770V788M829.500 770V788M869.500 770V788M890.500 770V788"/></g>
<g fill="#3a3a3a"><path d="M584 775H586V784H584ZM586 779.500 591 775V784ZM591 779.500 596 775V784Z"/><path d="M604 779.500 609 775V784ZM611 775H612V784H611Z"/><path d="M664 775H665V784H664ZM668 775 673 779.500 668 784Z"/><path d="M683 775 688 779.500 683 784ZM688 775 693 779.500 688 784ZM693 775H695V784H693Z"/></g>
<path d="M624 779.500 635 773V786Z" fill="#3be08c" stroke="#1c3a2a"/><path d="M644 773 655 779.500 644 786Z" fill="#3be08c" stroke="#1c3a2a"/>
<circle cx="715" cy="779" r="6.500" fill="#7d7d7d" stroke="#5a5a5a"/><path d="M711 783 719 775" stroke="#5a5a5a" stroke-width="1.500"/>
<circle cx="735" cy="779" r="6.500" fill="#e5475a" stroke="#222"/><circle cx="735" cy="779" r="3" fill="none" stroke="#222" stroke-width="1.500"/>
<circle cx="755" cy="779" r="6.500" fill="#e8394e" stroke="#222"/><text x="755" y="783" font-family="Liberation Sans,sans-serif" font-size="11" font-weight="bold" fill="#eee" text-anchor="middle">?</text>
<path d="M781 771 784 775H782V778H786V776L789 779.500 786 783V781H782V784H784L781 788 778 784H780V781H776V783L773 779.500 776 776V778H780V775H778Z" fill="#f09020" stroke="#333" stroke-width=".4"/>
<rect x="796" y="774" width="10" height="11" fill="#ee8a22" stroke="#7f5020" stroke-width=".5"/><path d="M801 785V779L806 774" stroke="#7a4a10" fill="none"/>
<circle cx="820" cy="779" r="5.500" fill="none" stroke="#ea8428" stroke-width="2"/>
<circle cx="841" cy="779" r="7" fill="none" stroke="#ea8428" stroke-width="1.500"/><text x="841" y="783" font-family="Liberation Sans,sans-serif" font-size="10" font-weight="bold" fill="#333" text-anchor="middle">P</text>
<g fill="#c88a30"><circle cx="855" cy="773" r="1"/><circle cx="860" cy="773" r="1"/><circle cx="865" cy="773" r="1"/><circle cx="855" cy="778" r="1"/><circle cx="865" cy="778" r="1"/></g><g fill="#333"><circle cx="855" cy="783" r="1"/><circle cx="860" cy="783" r="1"/><circle cx="865" cy="783" r="1"/><circle cx="860" cy="778" r="1"/></g>
<path d="M873 782 878 778 882 783 876 786Z" fill="#333"/><path d="M880 776H885V781" fill="none" stroke="#ccc" stroke-width="1.500"/>
<rect x="893" y="773" width="11" height="13" fill="#f2f2f2" stroke="#333" stroke-width=".6"/><path d="M895 777H902M895 780H902M895 783H902" stroke="#888"/><rect x="903" y="771" width="6" height="6" fill="#e88a2a"/><path d="M903 787H910V781Z" fill="#111"/>
</svg>

<!-- materials -->
<div style="left:40px;top:793px;width:568px;height:17px;background:#6f6f6f;border-bottom:1px solid #3c3c3c"></div>
<div style="left:40px;top:810px;width:568px;height:20px;background:#6a6a6a;border-bottom:2px solid #3c3c3c"></div>
<div style="left:43px;top:796px;width:10px;height:11px;background:linear-gradient(135deg,#999,#555);border:1px solid #3a3a3a"></div>
<span class="t" style="left:60px;top:795px;color:#f0a418">Materiali</span>
<div class="g" style="left:45px;top:814px"></div>
<span class="t" style="left:66px;top:814px">File</span><span class="t" style="left:96px;top:814px">Modifica</span><span class="t" style="left:150px;top:814px">Funzione</span><span class="t" style="left:207px;top:814px">Texture</span>
<div style="left:40px;top:914px;width:872px;height:2px;background:#3d3d3d"></div>
<div class="g" style="left:44px;top:923px"></div>
<span class="t" style="left:65px;top:922px">00:00:07</span>
<div class="t" style="left:41px;top:863px;width:30px;height:14px;background:#5b5b5b;border:1px solid #333;border-top:0;font-size:12px;color:#c8c8c8;overflow:hidden;padding-left:2px">3D 02</div>
<div class="t" style="left:75px;top:863px;width:30px;height:14px;background:#5b5b5b;border:1px solid #333;border-top:0;font-size:12px;color:#c8c8c8;overflow:hidden;padding-left:2px">3D 02</div>
<div class="t" style="left:109px;top:863px;width:30px;height:14px;background:#5b5b5b;border:1px solid #333;border-top:0;font-size:12px;color:#c8c8c8;overflow:hidden;padding-left:2px">3D 02</div>
<div class="t" style="left:143px;top:863px;width:30px;height:14px;background:#5b5b5b;border:1px solid #333;border-top:0;font-size:12px;color:#f0a418;overflow:hidden;padding-left:2px">Nuovo</div>

<!-- coordinates -->
<div style="left:609px;top:793px;width:3px;height:122px;background:#3c3c3c"></div>
<div style="left:612px;top:793px;width:298px;height:17px;background:#2e2e2e"></div>
<div style="left:616px;top:796px;width:10px;height:11px;background:linear-gradient(135deg,#999,#555)"></div>
<span class="t" style="left:633px;top:795px">Coordinate</span>
<div style="left:612px;top:829px;width:298px;height:1px;background:#333"></div>
<div class="g" style="left:618px;top:814px"></div>
<span class="t" style="left:636px;top:814px;color:#777">--</span><span class="t" style="left:728px;top:814px;color:#777">--</span><span class="t" style="left:820px;top:814px;color:#777">--</span>
<span class="t" style="left:615px;top:838px;font-size:12px;color:#9b9b9b">X</span><span class="t" style="left:615px;top:857px;font-size:12px;color:#9b9b9b">Y</span><span class="t" style="left:615px;top:876px;font-size:12px;color:#9b9b9b">Z</span>
<span class="t" style="left:713px;top:838px;font-size:12px;color:#9b9b9b">X</span><span class="t" style="left:713px;top:857px;font-size:12px;color:#9b9b9b">Y</span><span class="t" style="left:713px;top:876px;font-size:12px;color:#9b9b9b">Z</span>
<span class="t" style="left:812px;top:838px;font-size:12px;color:#9b9b9b">H</span><span class="t" style="left:812px;top:857px;font-size:12px;color:#9b9b9b">P</span><span class="t" style="left:812px;top:876px;font-size:12px;color:#9b9b9b">B</span>
<div class="f d" style="left:627px;top:836px;width:84px;height:16px">0 cm</div><div class="f d" style="left:725px;top:836px;width:84px;height:16px">0 cm</div><div class="f d" style="left:823px;top:836px;width:83px;height:16px">0 °</div>
<div class="f d" style="left:627px;top:855px;width:84px;height:16px">0 cm</div><div class="f d" style="left:725px;top:855px;width:84px;height:16px">0 cm</div><div class="f d" style="left:823px;top:855px;width:83px;height:16px">0 °</div>
<div class="f d" style="left:627px;top:874px;width:84px;height:16px">0 cm</div><div class="f d" style="left:725px;top:874px;width:84px;height:16px">0 cm</div><div class="f d" style="left:823px;top:874px;width:83px;height:16px">0 °</div>
<div class="p" style="left:628px;top:896px;width:82px;height:16px;text-align:left;padding-left:6px;background:#565656;color:#7b7b7b">Assoluto</div>
<div class="p" style="left:726px;top:896px;width:82px;height:16px;text-align:left;padding-left:6px;background:#565656;color:#7b7b7b">Scala</div>
<div class="p" style="left:824px;top:896px;width:82px;height:16px">Applica</div>

<!-- right panel -->
<div style="left:912px;top:0;width:3px;height:938px;background:#3c3c3c"></div>
<div style="left:915px;top:1px;width:45px;height:19px;background:#5c5c5c;border-radius:3px 3px 0 0"></div>
<div style="left:961px;top:1px;width:51px;height:19px;background:#3d3d3d;border-radius:3px 3px 0 0"></div>
<span class="t" style="left:921px;top:3px;color:#f0a418">Oggetti</span><span class="t" style="left:967px;top:3px;color:#8b8b8b">Struttura</span>
<div style="left:915px;top:19px;width:365px;height:23px;background:#5a5a5a;border-top:1px solid #7a7a7a;border-bottom:1px solid #333"></div>
<div class="g" style="left:921px;top:25px"></div>
<span class="t" style="left:941px;top:24px">File</span><span class="t" style="left:971px;top:24px">Modifica</span><span class="t" style="left:1025px;top:24px">Vista</span><span class="t" style="left:1062px;top:24px">Oggetti</span><span class="t" style="left:1110px;top:24px">Tag</span><span class="t" style="left:1143px;top:24px">Segnalib</span>
<div style="left:915px;top:42px;width:365px;height:424px;background:#4c4c4c"></div>
<div style="left:917px;top:44px;width:361px;height:20px;background:#555"></div><div style="left:917px;top:64px;width:361px;height:20px;background:#4e4e4e"></div><div style="left:917px;top:84px;width:361px;height:20px;background:#555"></div><div style="left:917px;top:104px;width:361px;height:20px;background:#4e4e4e"></div><div style="left:917px;top:124px;width:361px;height:20px;background:#555"></div>
<div style="left:985px;top:42px;width:1px;height:424px;background:#2f2f2f"></div><div style="left:1025px;top:42px;width:1px;height:424px;background:#2f2f2f"></div>
<span class="t" style="left:952px;top:49px">albero</span><span class="t" style="left:951px;top:69px">Sole</span><span class="t" style="left:951px;top:89px">Cielo</span><span class="t" style="left:951px;top:109px">Sfera</span><span class="t" style="left:951px;top:129px">Piano</span>

<!-- attributes -->
<div style="left:915px;top:466px;width:365px;height:19px;background:#2e2e2e;border-top:1px solid #6a6a6a"></div>
<div style="left:919px;top:470px;width:10px;height:11px;background:linear-gradient(135deg,#999,#555)"></div>
<span class="t" style="left:935px;top:469px">Attributi</span>
<div style="left:915px;top:485px;width:365px;height:19px;background:#5a5a5a;border-bottom:1px solid #333"></div>
<div class="g" style="left:921px;top:488px"></div>
<span class="t" style="left:941px;top:488px">Modo</span><span class="t" style="left:982px;top:488px">Modifica</span><span class="t" style="left:1036px;top:488px">Dati Utente</span>
<div style="left:915px;top:504px;width:362px;height:434px;background:#4b4b4b"></div>
<span class="t" style="left:943px;top:512px">Materiale [Nuovo]</span>
<div class="c" style="left:917px;top:531px;width:69px;height:18px">Base</div>
<div class="c" style="left:985px;top:531px;width:69px;height:18px;background:#8bafd9;color:#111">Luminanza</div>
<div class="c" style="left:1053px;top:531px;width:69px;height:18px;letter-spacing:-.2px">Illuminazione</div>
<div class="c" style="left:1121px;top:531px;width:69px;height:18px">Assegna</div>
<div style="left:921px;top:555px;width:8px;height:4px;background:#111;clip-path:polygon(0 0,100% 0,50% 100%)"></div>
<div style="left:917px;top:617px;width:358px;height:15px;background:#3a3a3a"></div>
<span class="t" style="left:919px;top:618px;font-weight:bold;color:#c8c8c8;font-size:12px">Luminanza</span>
<div class="o" style="left:920px;top:643px"></div><span class="t" style="left:928px;top:639px;font-size:11.500px;letter-spacing:-.2px">Colore</span>
<div style="left:972px;top:642px;width:8px;height:4px;background:#111;clip-path:polygon(0 0,100% 0,50% 100%)"></div>
<div style="left:983px;top:637px;width:22px;height:36px;background:#fff"></div>
<div class="p" style="left:983px;top:675px;width:22px;height:16px">▸</div>
<span class="t" style="left:1010px;top:639px;font-size:12px">R</span><span class="t" style="left:1010px;top:658px;font-size:12px">G</span><span class="t" style="left:1010px;top:677px;font-size:12px">B</span>
<div class="f" style="left:1024px;top:637px;width:60px;height:16px">255</div><div class="f" style="left:1024px;top:656px;width:60px;height:16px">255</div><div class="f" style="left:1024px;top:675px;width:60px;height:16px">255</div>
<div style="left:1088px;top:643px;width:184px;height:5px;background:linear-gradient(90deg,#000,#ff0000)"></div>
<div style="left:1088px;top:662px;width:184px;height:5px;background:linear-gradient(90deg,#000,#00ff00)"></div>
<div style="left:1088px;top:681px;width:184px;height:5px;background:linear-gradient(90deg,#000,#0000ff)"></div>
<div style="left:1266px;top:649px;width:8px;height:4px;background:#fff;clip-path:polygon(50% 0,100% 100%,0 100%)"></div>
<div style="left:1266px;top:668px;width:8px;height:4px;background:#fff;clip-path:polygon(50% 0,100% 100%,0 100%)"></div>
<div style="left:1266px;top:687px;width:8px;height:4px;background:#fff;clip-path:polygon(50% 0,100% 100%,0 100%)"></div>

<div class="o" style="left:920px;top:701px"></div><span class="t" style="left:928px;top:697px;letter-spacing:-.2px">Luminosità</span>
<div class="f" style="left:984px;top:695px;width:65px;height:15px;line-height:14px;padding-left:5px;border-radius:8px 0 0 8px">50 %</div>
<div style="left:1050px;top:695px;width:222px;height:15px;background:#393939;border-radius:0 8px 8px 0"></div>
<div style="left:1050px;top:695px;width:111px;height:15px;background:#858585"></div>
<div style="left:1161px;top:695px;width:2px;height:15px;background:#f0a020"></div>

<span class="t" style="left:929px;top:722px;letter-spacing:.4px">Texture. . .</span>
<div class="p" style="left:983px;top:720px;width:18px;height:16px;font-size:9px">▸</div>
<div class="p" style="left:1004px;top:720px;width:236px;height:16px">D:\TEXTURE\cielo\FullSkies0037_L.jpg</div>
<div class="p" style="left:1243px;top:720px;width:30px;height:16px">...</div>
<span class="t" style="left:1036px;top:741px;letter-spacing:-.1px">Campionamento</span>
<div class="p" style="left:1119px;top:739px;width:74px;height:16px;text-align:left;padding-left:6px">MIP</div>
<div style="left:1180px;top:746px;width:8px;height:3px;background:#ddd;clip-path:polygon(0 0,100% 0,50% 100%)"></div>
<div style="left:982px;top:760px;width:50px;height:12px;background:radial-gradient(ellipse 16px 8px at 50% 100%,#dfe9f3,rgba(223,233,243,0)),linear-gradient(#2a6fc0,#4d90d8)"></div>
<span class="t" style="left:1036px;top:760px">Offset Blur</span>
<div class="f" style="left:1118px;top:758px;width:76px;height:16px">0 %</div>
<span class="t" style="left:1036px;top:779px">Scala Blur</span>
<div class="f" style="left:1118px;top:777px;width:76px;height:16px">0 %</div>
<span class="t" style="left:982px;top:799px">Risoluzione 6000 x 1528, RGB (8 Bit)</span>
<div class="o" style="left:920px;top:821px"></div><span class="t" style="left:928px;top:817px">Modo Mix</span>
<div class="p" style="left:984px;top:815px;width:289px;height:16px;text-align:left;padding-left:7px">Normale</div>
<div style="left:1261px;top:822px;width:8px;height:3px;background:#ddd;clip-path:polygon(0 0,100% 0,50% 100%)"></div>
<div class="o" style="left:920px;top:841px"></div><span class="t" style="left:928px;top:837px">Forza Mix</span>
<div class="f" style="left:984px;top:835px;width:65px;height:15px;line-height:14px;padding-left:5px;border-radius:8px 0 0 8px">100 %</div>
<div style="left:1050px;top:835px;width:222px;height:15px;background:#858585;border-radius:0 8px 8px 0"></div>
<div style="left:1270px;top:836px;width:2px;height:13px;background:#f0a020"></div>
<div style="left:1161px;top:844px;width:1px;height:4px;background:#b09050"></div>

<!-- bottom strip -->
<div style="left:912px;top:938px;width:368px;height:1px;background:#333"></div>
<div style="left:0;top:938px;width:1280px;height:4px;background:linear-gradient(#eef0f4,#cfd3de)"></div>
</div></body></html>
